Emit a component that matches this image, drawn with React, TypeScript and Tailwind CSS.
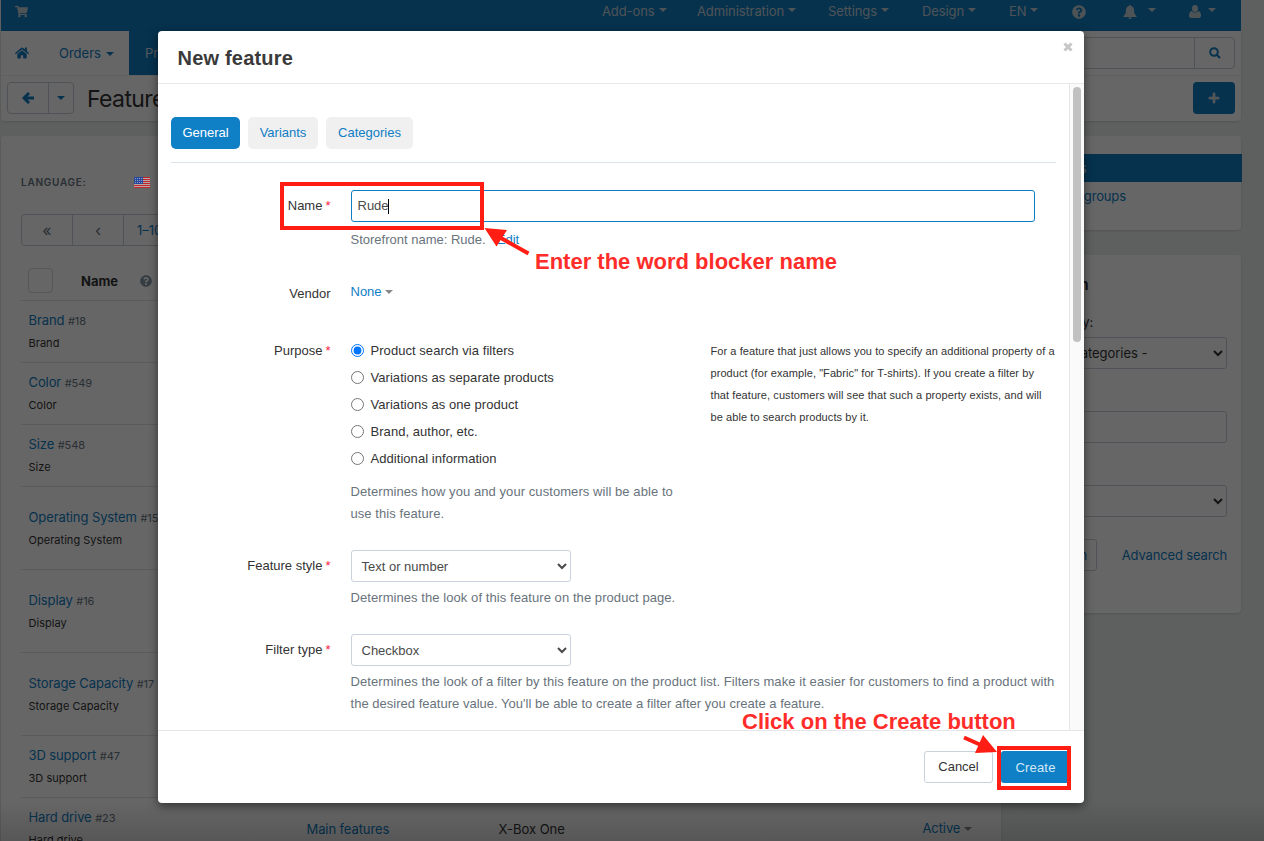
import React, { useState } from "react";
import { FaHome, FaPlus, FaQuestionCircle, FaShoppingCart } from "react-icons/fa";

const topMenu = [
  { label: "Add-ons", width: "w-[95px]" },
  { label: "Administration", width: "w-[131px]" },
  { label: "Settings", width: "w-[94px]" },
  { label: "Design", width: "w-[87px]" },
  { label: "EN", width: "w-[63px]" },
];

const features = [
  { name: "Brand", id: 18 },
  { name: "Color", id: 549 },
  { name: "Size", id: 548 },
  { name: "Operating System", id: 15, tall: true },
  { name: "Display", id: 16, tall: true },
  { name: "Storage Capacity", id: 17, tall: true },
  { name: "3D support", id: 47 },
  { name: "Hard drive", id: 23, group: "Main features", categories: "X-Box One", status: "Active" },
];

const purposes = [
  "Product search via filters",
  "Variations as separate products",
  "Variations as one product",
  "Brand, author, etc.",
  "Additional information",
];

const Caret = ({ className = "" }: { className?: string }) => (
  <svg viewBox="0 0 8 4" className={`h-1 w-2 shrink-0 ${className}`}>
    <path d="M0 0h8L4 4z" fill="currentColor" />
  </svg>
);

const Chevron = () => (
  <svg viewBox="0 0 10 7" className="h-[7px] w-[10px] shrink-0" fill="none" stroke="currentColor">
    <path d="M1 1l4 4 4-4" strokeWidth="2" />
  </svg>
);

const Flag = () => (
  <svg viewBox="0 0 16 11" className="relative z-10 h-[11px] w-4">
    <rect width="16" height="11" fill="#b9a5a5" />
    {[0, 2, 4, 6, 8, 10].map((y) => (
      <rect key={y} y={y} width="16" height="1" fill="#c0262b" />
    ))}
    <rect width="9" height="7" fill="#27479b" />
    {[1, 3, 5].map((y) =>
      [1, 3, 5, 7].map((x) => <rect key={`${x}-${y}`} x={x} y={y} width="1" height="1" fill="#8b9cc8" />)
    )}
  </svg>
);

const TopBar = () => (
  <header className="flex h-[31px] items-start bg-[#0f7dc4] pl-[14px] pt-[4px] text-[#c4d0d6]">
    <FaShoppingCart className="mt-px size-[13px]" />
    <nav className="ml-[574px] flex h-4 items-center text-[13px] tracking-[-0.1px]">
      {topMenu.map((item) => (
        <span key={item.label} className={`flex items-center gap-[4px] ${item.width}`}>
          {item.label}
          <Caret className="-mt-1" />
        </span>
      ))}
      <span className="w-[51px]">
        <FaQuestionCircle className="-mt-px size-[14px]" />
      </span>
      <span className="flex w-[66px] items-center gap-[11px]">
        <svg viewBox="0 0 14 14" className="-mt-px size-[14px]" fill="currentColor">
          <path d="M7 0c.7 0 1 .5 1 1 2 .4 3 2 3 4 0 3 .5 4.500 2.500 6v1h-13v-1C2.500 9.500 3 8 3 5c0-2 1-3.600 3-4 0-.5.300-1 1-1zM5.400 12.500h3.200c-.1 1-.8 1.500-1.600 1.500s-1.500-.5-1.600-1.500z" />
        </svg>
        <Caret className="-mt-1" />
      </span>
      <span className="flex items-center gap-[7px]">
        <svg viewBox="0 0 12 13" className="-mt-px h-[13px] w-3" fill="currentColor">
          <ellipse cx="6" cy="3.500" rx="3" ry="3.500" />
          <path d="M2.800 6C4.600 8 7.400 8 9.200 6 11 6.300 12 8 12 10.500c0 1.600-.9 2.500-2.200 2.500H2.200C.9 13 0 12.100 0 10.500 0 8 1 6.300 2.800 6z" />
        </svg>
        <Caret className="-mt-1" />
      </span>
    </nav>
  </header>
);

const Toolbar = () => (
  <div className="h-[90px] rounded-b bg-white shadow">
    <div className="flex h-[45px] items-center justify-between border-b border-[#f0f0f0] pr-[6px] text-[13px] text-[#0f7dc4]">
      <div className="flex h-full items-center">
        <FaHome className="ml-[14px] size-[14px]" />
        <span className="ml-[30px] flex w-[70px] items-center gap-[5px] pt-[2px]">
          Orders
          <Caret />
        </span>
        <span className="flex h-full w-[100px] items-center bg-[#0f7dc4] pl-4 pt-[2px] text-[#d3dde2]">Products</span>
      </div>
      <div className="flex h-8 w-[260px] rounded border border-[#c5cfda]">
        <span className="grow" />
        <span className="flex w-10 items-center justify-center border-l border-[#c5cfda]">
          <svg viewBox="0 0 12 12" className="size-3" fill="none" stroke="currentColor" strokeWidth="2">
            <circle cx="5" cy="5" r="3.800" />
            <path d="M7.500 7.500l3.500 3.500" strokeWidth="2.200" />
          </svg>
        </span>
      </div>
    </div>
    <div className="flex h-[44px] items-center pl-[6px] pr-[6px]">
      <div className="flex h-8 w-[67px] rounded border border-[#c5cfda] text-[#0f7dc4]">
        <span className="flex w-[41px] items-center justify-center border-r border-[#c5cfda]">
          <svg viewBox="0 0 12 12" className="size-3" fill="none" stroke="currentColor" strokeWidth="3">
            <path d="M7 1L2 6l5 5M2 6h10" />
          </svg>
        </span>
        <span className="flex grow items-center justify-center">
          <Caret />
        </span>
      </div>
      <h1 className="ml-[13px] pt-[2px] text-[23px] tracking-[-0.6px] text-[#333]">Features</h1>
      <span className="ml-auto flex h-8 w-[42px] items-center justify-center rounded bg-[#0f7dc4] text-[#ccd8de]">
        <FaPlus className="size-3" stroke="currentColor" strokeWidth="20" />
      </span>
    </div>
  </div>
);

const FeatureList = () => (
  <section className="h-[720px] w-[1000px] rounded bg-white pl-5 pr-5 shadow">
    <div className="flex h-[78px] items-center pt-[14px]">
      <span className="w-[113px] text-[10px] font-semibold tracking-[0.75px] text-[#677682]">LANGUAGE:</span>
      <Flag />
    </div>
    <div className="flex h-8 w-[220px] rounded border border-[#c5cfda] text-[13px] text-[#677682]">
      {["«", "‹"].map((mark) => (
        <span key={mark} className="flex w-[51px] items-center justify-center border-r border-[#c5cfda] pb-px text-base">
          {mark}
        </span>
      ))}
      <span className="flex items-center pl-[13px] pt-[2px] text-[#0f7dc4]">1–10</span>
    </div>
    <div className="flex h-[55px] items-center border-b border-[#dfe3e8] pl-[7px] pt-[14px]">
      <span className="size-[25px] rounded border border-[#d5d9de]" />
      <span className="ml-7 pt-[3px] text-[13px] font-bold text-[#333]">Name</span>
      <FaQuestionCircle className="ml-[22px] mt-[2px] size-3 text-[#8496a5]" />
    </div>
    {features.map((item) => (
      <div
        key={item.id}
        className={`flex items-center border-b border-[#dfe3e8] pl-[7.500px] text-[13px] tracking-[-0.1px] ${item.tall ? "h-[83px] pt-px" : "h-[62px]"}`}
      >
        <div className="w-[278px]">
          <div className="h-[23px] leading-[23px] text-[#0f7dc4]">
            {item.name} <span className="text-[11px] text-[#677682]">#{item.id}</span>
          </div>
          <div className="h-[23px] text-[11px] leading-[23px] tracking-[0.03px] text-[#333]">{item.name}</div>
        </div>
        <span className="w-[192px] pt-[3px] text-[#0f7dc4]">{item.group}</span>
        <span className="w-[424px] pt-[3px] tracking-normal text-[#333]">{item.categories}</span>
        {item.status && (
          <span className="flex items-center gap-1 pt-px text-[#0f7dc4]">
            {item.status}
            <Caret className="text-[#888]" />
          </span>
        )}
      </div>
    ))}
  </section>
);

const Sidebar = () => (
  <aside className="w-[219px] text-[13px] tracking-[-0.15px] text-[#333]">
    <div className="h-[94px] rounded bg-white pt-[18px] shadow">
      <div className="-mr-px flex h-7 items-center bg-[#0f7dc4] pl-[12.500px] pt-[2px] text-[#d3dde2]">Features</div>
      <div className="flex h-7 items-center pl-[13px] pt-[2px] text-[#0f7dc4]">Feature groups</div>
    </div>
    <div className="mt-[25px] h-[358px] rounded bg-white px-[14px] pt-[18px] shadow">
      <h2 className="ml-px h-6 text-[15px] font-bold leading-6 tracking-normal">Search</h2>
      <div className="-ml-[2px] mt-[14px] h-[22px] leading-[22px]">Category:</div>
      <div className="mt-1 flex h-8 items-center justify-between rounded-[3px] border border-[#c5cfda] pl-[8px] pr-[3px]">
        <span className="pt-[2px] tracking-[-0.05px]">- All categories -</span>
        <Chevron />
      </div>
      <div className="mt-[42px] h-8 rounded-[3px] border border-[#c5cfda]" />
      <div className="mt-[42px] flex h-8 items-center justify-end rounded-[3px] border border-[#c5cfda] pr-[3px]">
        <Chevron />
      </div>
      <div className="mt-[22px] flex items-center justify-between text-[#0f7dc4]">
        <span className="flex h-8 w-[61px] items-center justify-center rounded-[3px] border border-[#c5cfda] pt-[2px] pr-px">
          Search
        </span>
        <span className="pt-[2px]">Advanced search</span>
      </div>
    </div>
  </aside>
);

const Row = ({
  label,
  required = true,
  className,
  children,
}: {
  label: string;
  required?: boolean;
  className: string;
  children: React.ReactNode;
}) => (
  <div className={`flex gap-[19.500px] ${className}`}>
    <div className="flex h-8 w-40 shrink-0 items-center justify-end gap-[3px] pr-[0.5px]">
      {label}
      {required && <span className="text-[#ff2040]">*</span>}
    </div>
    <div className="min-w-0 grow">{children}</div>
  </div>
);

const Select = ({ value }: { value: string }) => (
  <div className="ml-[0.5px] flex h-8 w-[220px] items-center justify-between rounded-[3px] border border-[#c8d2dc] pl-[9.500px] pr-[3px] pt-px text-[#4a4a4a]">
    {value}
    <Chevron />
  </div>
);

const FeatureForm = () => {
  const [purpose, setPurpose] = useState(0);

  return (
    <div className="w-[911px] shrink-0 pl-[13px] pr-[13px] pt-[33px]">
      <div className="flex h-[46px] gap-2 border-b border-[#d9e3ec] text-[#0f7dc4]">
        <span className="flex h-8 w-[69px] items-center justify-center rounded-[5px] bg-[#0f7fc6] text-white">General</span>
        <span className="flex h-8 w-[70px] items-center justify-center rounded-[5px] bg-[#f0f0f0]">Variants</span>
        <span className="flex h-8 w-[87px] items-center justify-center rounded-[5px] bg-[#f0f0f0]">Categories</span>
      </div>

      <Row label="Name" className="mt-[27px] h-[88px]">
        <div className="ml-[0.5px] flex h-8 w-[684px] items-center rounded-[3px] border border-[#0f7dc4] pl-[5.500px] text-[#4a4a4a]">
          Rude
          <span className="-ml-px h-[15px] w-px bg-black" />
        </div>
        <p className="mt-[7px] leading-[22px] text-[#69737c]">
          Storefront name: Rude. <span className="ml-[7.500px] text-[#0f7dc4]">Edit</span>
        </p>
      </Row>

      <Row label="Vendor" required={false} className="h-[57px]">
        <span className="flex h-7 items-center gap-[3px] text-[#0f7dc4]">
          None
          <Caret className="text-[#888]" />
        </span>
      </Row>

      <Row label="Purpose" className="h-[215px]">
        <div className="flex justify-between pt-[2px]">
          <div className="w-[340px]">
            {purposes.map((text, index) => (
              <label key={text} className="flex h-[27px] items-center gap-[6.500px] tracking-[0.05px]">
                <input
                  type="radio"
                  name="purpose"
                  className="ml-[0.5px] size-[13px] accent-[#0075ff]"
                  checked={purpose === index}
                  onChange={() => setPurpose(index)}
                />
                {text}
              </label>
            ))}
            <p className="mt-[9px] leading-[22px] tracking-[0.07px] text-[#69737c]">
              Determines how you and your customers will be able to
              <br />
              use this feature.
            </p>
          </div>
          <p className="w-[345.500px] shrink-0 whitespace-nowrap pt-[3px] text-[11px] leading-[22px] tracking-[0.075px]">
            For a feature that just allows you to specify an additional property of a
            <br />
            product (for example, "Fabric" for T-shirts). If you create a filter by
            <br />
            that feature, customers will see that such a property exists, and will
            <br />
            be able to search products by it.
          </p>
        </div>
      </Row>

      <Row label="Feature style" className="h-[84px]">
        <Select value="Text or number" />
        <p className="mt-[5px] leading-[22px] tracking-[0.07px] text-[#69737c]">
          Determines the look of this feature on the product page.
        </p>
      </Row>

      <Row label="Filter type" className="h-[100px]">
        <Select value="Checkbox" />
        <p className="mt-[5px] whitespace-nowrap leading-[22px] text-[#69737c]">
          <span className="tracking-[0.08px]">
            Determines the look of a filter by this feature on the product list. Filters make it easier for customers to find a product with
          </span>
          <br />
          <span className="tracking-[0.02px]">
            the desired feature value. You'll be able to create a filter after you create a feature.
          </span>
        </p>
      </Row>
    </div>
  );
};

const Modal = () => (
  <div className="absolute left-[158px] top-[31px] flex h-[772px] w-[926px] flex-col rounded-[4px] bg-white font-['Liberation_Sans',Arial,sans-serif] text-[13px] text-[#333] shadow-[0_3px_10px_rgba(0,0,0,0.5)]">
    <div className="flex h-[53px] shrink-0 justify-between border-b border-[#e8e8e8] pl-[19.500px] pr-[11px]">
      <h3 className="pt-[1px] text-[20px] font-bold leading-[52px] tracking-[0.2px] text-[#3a3a3a]">New feature</h3>
      <svg viewBox="0 0 10 10" className="mt-[10.500px] size-[10px]" stroke="#c6c6c6" strokeWidth="3">
        <path d="M1.500 1.500l7 7m0-7l-7 7" />
      </svg>
    </div>
    <div className="flex min-h-0 grow overflow-hidden">
      <FeatureForm />
      <div className="flex grow justify-center border-l border-[#e6e6e6] bg-[#fafafa] pt-[3px]">
        <span className="h-[255px] w-2 rounded-full bg-[#c1c1c1]" />
      </div>
    </div>
    <div className="flex h-[73px] shrink-0 items-center justify-end gap-2 border-t border-[#e6e6e6] pr-[15px]">
      <span className="flex h-8 w-[69px] items-center justify-center rounded-[3px] border border-[#c8d2dc]">Cancel</span>
      <span className="flex h-8 w-[68px] items-center justify-center rounded-[3px] bg-[#0f7fc6] pl-px pt-[2px] tracking-[0.2px] text-[#d4e9f6]">
        Create
      </span>
    </div>
  </div>
);

const Annotations = () => (
  <div className="pointer-events-none absolute inset-0 font-['Liberation_Sans',Arial,sans-serif] text-[22px] font-bold leading-[26px] text-[#ff2d29]">
    <div className="absolute left-[280px] top-[182px] h-[48px] w-[204px] border-4 border-[#ff1d14]" />
    <div className="absolute left-[997px] top-[746px] h-[44px] w-[74px] border-4 border-[#ff1d14]" />
    <svg viewBox="0 0 1264 841" className="absolute inset-0" fill="#ff1d14" stroke="#ff1d14">
      <path d="M528.500 253.500L500 237.500M964 737.500L982 745.500" strokeWidth="4" />
      <path d="M484.500 228l22.500 2L496.500 246.500zM997 752l-14-17L975 753z" stroke="none" />
    </svg>
    <span className="absolute left-[535px] top-[249px] whitespace-nowrap">Enter the word blocker name</span>
    <span className="absolute left-[742px] top-[709px] whitespace-nowrap">Click on the Create button</span>
  </div>
);

export default function App() {
  return (
    <div className="relative h-[841px] w-[1264px] overflow-hidden bg-[#ecf0ef] font-['Inter',sans-serif]">
      <div className="ml-px w-[1240px]">
        <TopBar />
        <Toolbar />
        <div className="mt-[15px] flex justify-between">
          <FeatureList />
          <Sidebar />
        </div>
      </div>
      <div className="absolute inset-0 bg-black/60" />
      <div className="absolute inset-x-0 bottom-0 h-10 bg-linear-to-b from-transparent to-black/15" />
      <Modal />
      <Annotations />
    </div>
  );
}
